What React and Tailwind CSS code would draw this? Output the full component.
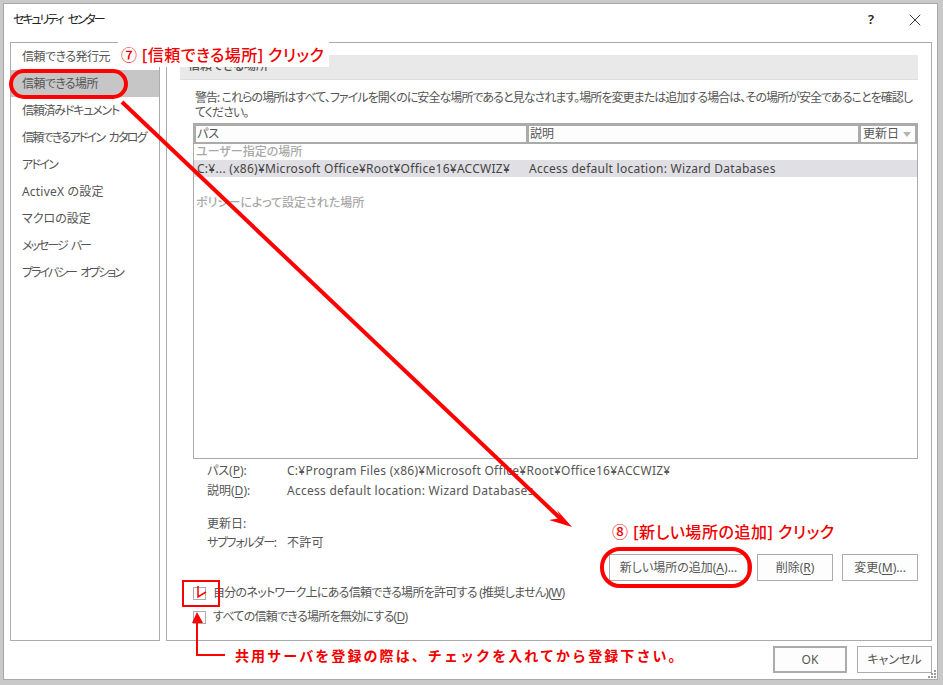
import React from "react";
import { X } from "lucide-react";

const navItems = [
  { label: "信頼できる発行元", fit: "tracking-[-0.5px]" },
  { label: "信頼できる場所", fit: "tracking-[-0.6px]" },
  { label: "信頼済みドキュメント", fit: "tracking-[-1.2px]" },
  { label: "信頼できるアドイン カタログ", fit: "tracking-[-1.75px] [word-spacing:3px]" },
  { label: "アドイン", fit: "tracking-[-1.7px]" },
  { label: "ActiveX の設定", fit: "tracking-[0.2px]" },
  { label: "マクロの設定", fit: "" },
  { label: "メッセージ バー", fit: "tracking-[-2px] [word-spacing:3px]" },
  { label: "プライバシー オプション", fit: "tracking-[-2px] [word-spacing:3px]" },
];

const Hotkey = ({ children }) => <span className="underline underline-offset-2">{children}</span>;

const Sidebar = () => (
  <div className="w-[150px] shrink-0 border border-[#ababab] flex flex-col">
    {navItems.map((item, i) => (
      <div
        key={item.label}
        className={`h-[27px] shrink-0 flex items-center pl-[11px] pt-[1px] whitespace-nowrap ${item.fit} ${i === 1 ? "bg-[#c6c6c6]" : ""}`}
      >
        {item.label}
      </div>
    ))}
  </div>
);

const PathTable = () => (
  <div className="ml-[26px] mr-[13px] mt-[3px] h-[336px] border border-[#ababab] flex flex-col">
    <div className="h-[20px] shrink-0 bg-[#ababab] flex gap-[3px] pl-[2px] pr-[2px] pt-[2px] pb-[2px]">
      <div className="w-[330px] bg-[#fdfdfd] flex items-center pl-[1px]">パス</div>
      <div className="w-[329px] bg-[#fdfdfd] flex items-center pl-[1px]">説明</div>
      <div className="flex-1 bg-[#fdfdfd] flex items-center pl-[2px] gap-[4px]">
        更新日
        <span className="w-0 h-0 border-l-[4px] border-r-[4px] border-t-[5px] border-l-transparent border-r-transparent border-t-[#b5b5b5]" />
      </div>
    </div>
    <div className="h-[16px] pl-[2px] flex items-center text-[#a8a8a8] font-medium whitespace-nowrap">ユーザー指定の場所</div>
    <div className="h-[17px] bg-[#e0dfe3] flex items-center text-[#444] whitespace-nowrap tracking-[0.27px]">
      <div className="w-[335px] pl-[3px]">C:¥... (x86)¥Microsoft Office¥Root¥Office16¥ACCWIZ¥</div>
      <div>Access default location: Wizard Databases</div>
    </div>
    <div className="mt-[17px] h-[17px] pl-[2px] flex items-center text-[#a8a8a8] font-medium whitespace-nowrap">ポリシーによって設定された場所</div>
  </div>
);

const DetailRow = ({ label, value, className = "" }) => (
  <div className={`flex h-[19px] items-center whitespace-nowrap ${className}`}>
    <div className="w-[80px]">{label}</div>
    <div className="tracking-[0.27px]">{value}</div>
  </div>
);

const Button = ({ className = "", children }) => (
  <div className={`h-[27px] border border-[#ababab] bg-[#fdfdfd] flex items-center justify-center whitespace-nowrap ${className}`}>
    {children}
  </div>
);

const CheckRow = ({ children }) => (
  <div className="flex items-center gap-[7px] whitespace-nowrap h-[14px] tracking-[-0.72px]">
    <span className="w-[13px] h-[13px] border border-[#ababab] bg-white shrink-0" />
    {children}
  </div>
);

const MainPanel = () => (
  <div className="w-[766px] shrink-0 border border-[#ababab] flex flex-col">
    <div className="ml-[13px] mr-[13px] mt-[12px] h-[25px] bg-[#e9e9e9] border-b border-[#dedede] pl-[8px] pt-[2px] font-medium text-[#555] whitespace-nowrap">
      信頼できる場所
    </div>
    <div className="ml-[28px] mt-[10px] leading-[15px] whitespace-nowrap tracking-[-0.94px]">
      <div>警告: これらの場所はすべて、ファイルを開くのに安全な場所であると見なされます。場所を変更または追加する場合は、その場所が安全であることを確認し</div>
      <div>てください。</div>
    </div>
    <PathTable />
    <div className="ml-[40px] mt-[2px]">
      <DetailRow label={<>パス(<Hotkey>P</Hotkey>):</>} value="C:¥Program Files (x86)¥Microsoft Office¥Root¥Office16¥ACCWIZ¥" />
      <DetailRow className="mt-[1px]" label={<>説明(<Hotkey>D</Hotkey>):</>} value="Access default location: Wizard Databases" />
      <DetailRow className="mt-[14px]" label="更新日:" />
      <DetailRow label={<span className="tracking-[-1.2px]">サブフォルダー:</span>} value="不許可" />
    </div>
    <div className="mr-[13px] mt-[2px] flex justify-end gap-[9px]">
      <Button className="w-[139px]"><span>新しい場所の追加(<Hotkey>A</Hotkey>)...</span></Button>
      <Button className="w-[76px]"><span>削除(<Hotkey>R</Hotkey>)</span></Button>
      <Button className="w-[76px]"><span>変更(<Hotkey>M</Hotkey>)...</span></Button>
    </div>
    <div className="ml-[26px] mt-[5px] flex flex-col gap-[10px]">
      <CheckRow><span>自分のネットワーク上にある信頼できる場所を許可する (推奨しません)(<Hotkey>W</Hotkey>)</span></CheckRow>
      <CheckRow><span>すべての信頼できる場所を無効にする(<Hotkey>D</Hotkey>)</span></CheckRow>
    </div>
  </div>
);

// 赤い注釈（画面の上に重ねる）
const Annotations = () => (
  <>
    <svg className="absolute left-0 top-0 pointer-events-none" width="943" height="685" viewBox="0 0 943 685" fill="none">
      <line x1="122" y1="102" x2="562" y2="520" stroke="#ff0000" strokeWidth="4" />
      <polygon points="572,527 557,510 561,518 549,520" fill="#ff0000" />
      <path d="M198 586 V597 L206 592" stroke="#ff0000" strokeWidth="1.5" />
      <path d="M197 620 V655 H225" stroke="#ff0000" strokeWidth="2" />
      <polygon points="197,612 192,623 203,623" fill="#ff0000" />
      <g fill="#9a9a9a">
        <rect x="934" y="670" width="2" height="2" />
        <rect x="931" y="673" width="2" height="2" />
        <rect x="934" y="673" width="2" height="2" />
        <rect x="928" y="676" width="2" height="2" />
        <rect x="931" y="676" width="2" height="2" />
        <rect x="934" y="676" width="2" height="2" />
      </g>
    </svg>
    <div className="absolute left-[118px] top-[42px] w-[211px] h-[25px] bg-white flex items-center pl-[3px] text-[16px] font-medium text-[#f00000] whitespace-nowrap tracking-[0.45px]">
      ⑦ [信頼できる場所] クリック
    </div>
    <div className="absolute left-[612px] top-[521px] h-[21px] flex items-center text-[16px] font-medium text-[#f00000] whitespace-nowrap tracking-[0.55px]">
      ⑧ [新しい場所の追加] クリック
    </div>
    <div className="absolute left-[9px] top-[69px] w-[119px] h-[30px] rounded-[15px] border-[4px] border-[#ff0000]" />
    <div className="absolute left-[600px] top-[547px] w-[152px] h-[41px] rounded-[20px] border-[4px] border-[#ff0000]" />
    <div className="absolute left-[182px] top-[580px] w-[38px] h-[27px] border-2 border-[#ff0000]" />
    <div className="absolute left-[235px] top-[645px] h-[20px] flex items-center text-[14px] font-bold text-[#f00000] whitespace-nowrap tracking-[2.08px] [font-feature-settings:normal]">
      共用サーバを登録の際は、チェックを入れてから登録下さい。
    </div>
  </>
);

const App = () => {
  return (
    <div className="relative w-[943px] h-[685px] overflow-hidden bg-[#c9c9c9] pt-[3px] pl-[3px] text-[12px] text-[#555] font-['Noto_Sans','Noto_Sans_CJK_JP',sans-serif] [font-feature-settings:'palt']">
      <div className="w-[935px] h-[677px] bg-white border border-[#a8a8a8] flex flex-col">
        <div className="h-[38px] shrink-0 flex items-center pl-[9px] pr-[12px] pb-[7px] text-[#222] whitespace-nowrap">
          <span className="tracking-[-2.1px] [word-spacing:4px]">セキュリティ センター</span>
          <span className="ml-auto mr-[31px] text-[13px] font-semibold">?</span>
          <X size={20} strokeWidth={1.2} className="text-[#333]" />
        </div>
        <div className="h-[599px] shrink-0 flex gap-[6px] pl-[6px] pr-[6px]">
          <Sidebar />
          <MainPanel />
        </div>
        <div className="flex justify-end gap-[10px] pr-[5px] pt-[5px]">
          <Button className="w-[74px] h-[27px] border-2">OK</Button>
          <Button className="w-[75px] h-[27px]">キャンセル</Button>
        </div>
      </div>
      <Annotations />
    </div>
  );
};

export default App;
